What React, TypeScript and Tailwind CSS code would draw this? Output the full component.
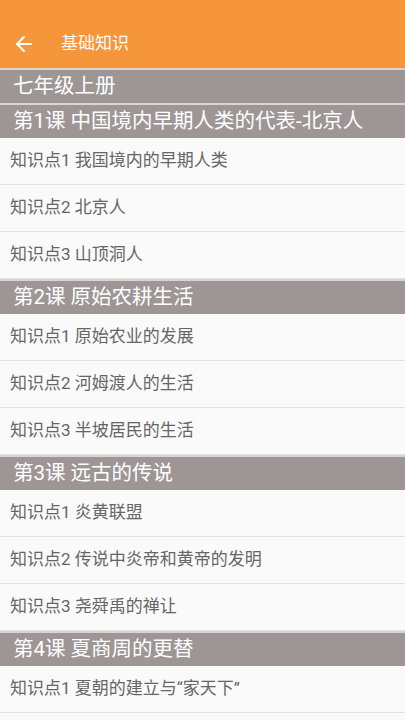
import { ArrowLeft } from 'lucide-react';

const groups = [
  {
    title: '第1课 中国境内早期人类的代表-北京人',
    items: ['知识点1 我国境内的早期人类', '知识点2 北京人', '知识点3 山顶洞人'],
  },
  {
    title: '第2课 原始农耕生活',
    items: ['知识点1 原始农业的发展', '知识点2 河姆渡人的生活', '知识点3 半坡居民的生活'],
  },
  {
    title: '第3课 远古的传说',
    items: ['知识点1 炎黄联盟', '知识点2 传说中炎帝和黄帝的发明', '知识点3 尧舜禹的禅让'],
  },
  {
    title: '第4课 夏商周的更替',
    items: ['知识点1 夏朝的建立与“家天下”'],
  },
];

const Band = ({ text }: { text: string }) => (
  <div className="border-t-2 border-[#d6d6d6]">
    <div className="h-[33px] flex items-center pl-[13px] bg-[#9d9695] text-white text-[20.5px] leading-none whitespace-nowrap">
      {text}
    </div>
  </div>
);

const App = () => {
  return (
    <div
      className="w-[405px] h-[720px] overflow-hidden bg-[#fafafa]"
      style={{ fontFamily: 'Roboto, "Noto Sans CJK SC", sans-serif' }}
    >
      {/* Toolbar */}
      <div className="h-[68px] bg-[#f5963b] flex items-end">
        <div className="h-12 w-full flex items-center">
          <ArrowLeft size={24} strokeWidth={2} className="text-white ml-3" />
          <span className="ml-[25px] text-white text-[17px]">基础知识</span>
        </div>
      </div>

      <Band text="七年级上册" />

      {groups.map((g) => (
        <div key={g.title}>
          <Band text={g.title} />
          {g.items.map((it) => (
            <div
              key={it}
              className="h-[47px] flex items-center pl-[10px] border-b border-[#e2e2e2] text-[17px] text-[#666666] whitespace-nowrap"
            >
              {it}
            </div>
          ))}
        </div>
      ))}
    </div>
  );
};

export default App;
